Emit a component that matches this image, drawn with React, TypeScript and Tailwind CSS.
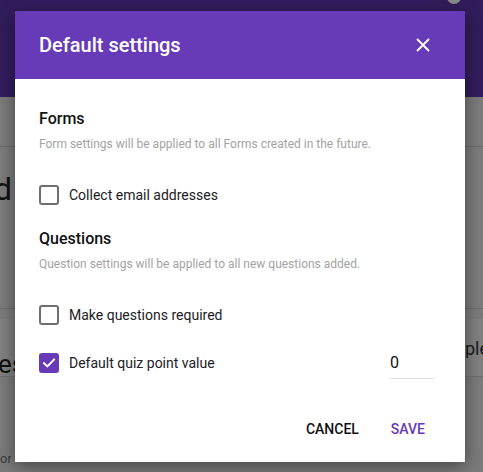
import React from "react";

function Checkbox({ checked }: { checked?: boolean }) {
  if (checked) {
    return (
      <div className="flex h-5 w-5 shrink-0 items-center justify-center rounded-[3px] bg-[#673ab7]">
        <svg width="14" height="14" viewBox="0 0 14 14" fill="none">
          <path d="M2 7.2 L5.4 10.4 L12 3.6" stroke="white" strokeWidth="2" strokeLinecap="square" />
        </svg>
      </div>
    );
  }
  return <div className="h-5 w-5 shrink-0 rounded-[3px] border-2 border-[#6f6f6f]" />;
}

export default function App() {
  return (
    <div className="relative flex h-[472px] w-[483px] flex-col overflow-hidden bg-[#7b7b7b]" style={{ fontFamily: "Roboto, 'Liberation Sans', sans-serif" }}>
      {/* background page behind scrim */}
      <div className="flex h-[97px] shrink-0 justify-end bg-[#321d5c]">
        <div className="mr-[22px] -mt-[10px] h-[14px] w-[14px] rounded-full bg-[#8a8a8a]" />
      </div>
      <div className="h-[50px] shrink-0 border-b border-[#6c6c6c]" />
      <div className="h-[162px] shrink-0 border-b border-[#6c6c6c] pt-[26px]">
        <div className="w-[12px] overflow-hidden">
          <div className="flex justify-end text-[32px] leading-none text-[#111]">d</div>
        </div>
      </div>
      <div className="h-[10px] shrink-0" />
      <div className="flex h-[58px] shrink-0 items-center justify-between border-b border-[#6e6e6e] bg-[#808080]">
        <div className="mt-[32px] w-[15px] overflow-hidden">
          <div className="-ml-[2px] text-[26px] leading-none text-[#111]">es</div>
        </div>
        <div className="mt-[2px] w-[18px] overflow-hidden text-[18px] leading-none text-[#1a1a1a]">ple</div>
      </div>
      <div className="mt-[75px] w-[11px] overflow-hidden text-[13px] leading-none text-[#3c3c3c]">or</div>

      {/* dialog */}
      <div className="absolute left-[15px] top-[11px] flex h-[451px] w-[450px] flex-col bg-white shadow-[0_4px_16px_rgba(0,0,0,0.45)]">
        <div className="flex h-[68px] shrink-0 items-center justify-between bg-[#673ab7] pl-6 pr-[35px]">
          <div className="text-[20px] font-medium text-white">Default settings</div>
          <svg width="14" height="14" viewBox="0 0 14 14">
            <path d="M1 1 L13 13 M13 1 L1 13" stroke="white" strokeWidth="1.8" />
          </svg>
        </div>
        <div className="flex flex-col pl-6 pr-[31px] pt-[28px]">
          <div className="text-[16px] font-medium leading-6 text-[#111]">Forms</div>
          <div className="mt-[5px] text-[12px] leading-4 text-[#a3a3a3]">Form settings will be applied to all Forms created in the future.</div>
          <div className="mt-[19px] flex h-12 items-center gap-[10px]">
            <Checkbox />
            <span className="text-[14px] text-[#202124]">Collect email addresses</span>
          </div>
          <div className="mt-2 text-[16px] font-medium leading-6 text-[#111]">Questions</div>
          <div className="mt-[5px] text-[12px] leading-4 text-[#a3a3a3]">Question settings will be applied to all new questions added.</div>
          <div className="mt-[19px] flex h-12 items-center gap-[10px]">
            <Checkbox />
            <span className="text-[14px] text-[#202124]">Make questions required</span>
          </div>
          <div className="flex h-12 items-center gap-[10px]">
            <Checkbox checked />
            <span className="text-[14px] text-[#202124]">Default quiz point value</span>
            <div className="ml-auto flex h-8 w-[44px] items-center border-b border-[#e0e0e0] text-[16px] text-[#111]">0</div>
          </div>
        </div>
        <div className="mt-[24px] flex justify-end pr-6">
          <button className="h-9 px-4 text-[14px] font-medium text-[#111]">CANCEL</button>
          <button className="h-9 px-4 text-[14px] font-medium text-[#673ab7]">SAVE</button>
        </div>
      </div>
    </div>
  );
}
